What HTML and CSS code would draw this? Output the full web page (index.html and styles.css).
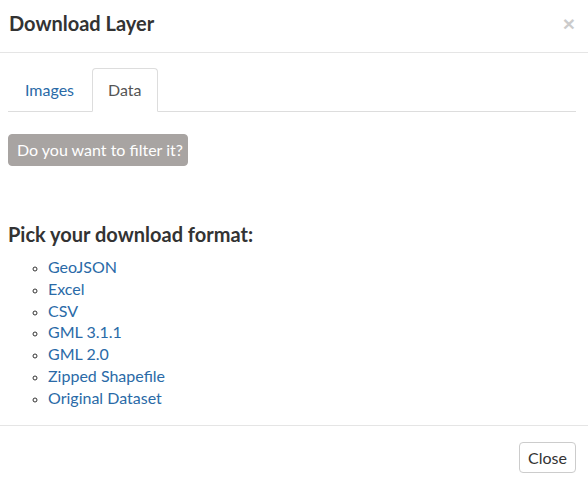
FILE: index.html
```html
<!DOCTYPE html>
<html>
<head>
<meta charset="utf-8">
<link rel="stylesheet" href="styles.css">
</head>
<body>
<div class="modal">
  <div class="modal-header">
    <h4 class="modal-title">Download Layer</h4>
    <span class="close">&times;</span>
  </div>
  <div class="modal-body">
    <ul class="tabs">
      <li><a class="tab">Images</a></li>
      <li><a class="tab active">Data</a></li>
    </ul>
    <button class="filter-btn">Do you want to filter it?</button>
    <h4 class="section-title">Pick your download format:</h4>
    <ul class="formats">
      <li><a>GeoJSON</a></li>
      <li><a>Excel</a></li>
      <li><a>CSV</a></li>
      <li><a>GML 3.1.1</a></li>
      <li><a>GML 2.0</a></li>
      <li><a>Zipped Shapefile</a></li>
      <li><a>Original Dataset</a></li>
    </ul>
  </div>
  <div class="modal-footer">
    <button class="close-btn">Close</button>
  </div>
</div>
</body>
</html>
```

FILE: styles.css
```css
* { box-sizing: border-box; }
html, body { margin: 0; padding: 0; background: #fff; }
body {
  font-family: Lato, "Open Sans", sans-serif;
  font-size: 16px;
  line-height: 1.42857;
  color: #333;
  width: 588px;
  height: 483px;
  overflow: hidden;
}
.modal-header {
  height: 53px;
  border-bottom: 1px solid #e5e5e5;
  display: flex;
  align-items: center;
  justify-content: space-between;
  padding: 0 13px 6px 9px;
}
.modal-title {
  margin: 0;
  font-size: 20px;
  font-weight: 700;
  color: #333;
  line-height: 24px;
}
.close {
  font-size: 21px;
  font-weight: 700;
  color: #000;
  opacity: 0.2;
  line-height: 1;
  font-family: "Liberation Sans", Arial, sans-serif;
}
.modal-body {
  padding: 15px 12px 0 8px;
  height: 373px;
  border-bottom: 1px solid #e5e5e5;
}
.tabs {
  list-style: none;
  margin: 0;
  padding: 0 0 0 1px;
  display: flex;
  border-bottom: 1px solid #ddd;
}
.tabs li { margin-bottom: -1px; }
.tab {
  display: block;
  padding: 10px 15px;
  margin-right: 2px;
  line-height: 22px;
  border: 1px solid transparent;
  border-radius: 4px 4px 0 0;
  color: #2a6aa7;
}
.tab.active {
  color: #555;
  background: #fff;
  border-color: #ddd #ddd transparent #ddd;
}
.filter-btn {
  margin-top: 22px;
  display: block;
  font-family: inherit;
  font-size: 16px;
  line-height: 20px;
  color: #fff;
  background: #a8a4a2;
  border: 1px solid #a8a4a2;
  border-radius: 4px;
  padding: 5px 8px;
  height: 32px;
  width: 180px;
  text-align: left;
  white-space: nowrap;
}
.section-title {
  margin: 56px 0 0 0;
  font-size: 20px;
  font-weight: 700;
  line-height: 24px;
  color: #333;
}
.formats {
  list-style: circle;
  margin: 10px 0 0 0;
  padding-left: 40px;
}
.formats li { line-height: 21.8px; font-size: 16px; }
.formats li::marker { color: #333; font-size: 13px; }
.formats a { color: #2a6aa7; }
.modal-footer {
  display: flex;
  justify-content: flex-end;
  padding: 16px 12px 0 0;
}
.close-btn {
  font-family: inherit;
  font-size: 16px;
  color: #333;
  background: #fff;
  border: 1px solid #ccc;
  border-radius: 4px;
  height: 31px;
  padding: 0 8px;
  line-height: 29px;
}
```
